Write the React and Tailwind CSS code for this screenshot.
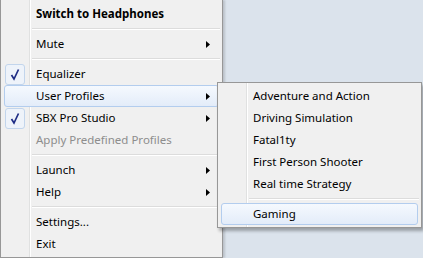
import React from 'react'

const font = { fontFamily: '"Segoe UI", "Noto Sans", sans-serif' }

function Arrow() {
  return (
    <svg width="4" height="7" viewBox="0 0 4 7" className="absolute right-[8px] top-[7px]">
      <path d="M0 0 L4 3.5 L0 7 Z" fill="#000" />
    </svg>
  )
}

function Check() {
  return (
    <div className="absolute left-0 top-0 w-[20px] h-[21px] rounded-[3px] border border-[#c2d5ec] bg-[#eef3fa]">
      <svg width="18" height="19" viewBox="0 0 18 19" className="absolute left-0 top-0">
        <path d="M5.5 10 L8 14 L12.5 4.5" fill="none" stroke="#1f2d85" strokeWidth="1.7" strokeLinejoin="miter" />
      </svg>
    </div>
  )
}

function Item({ label, bold, arrow, checked, active, disabled }) {
  return (
    <div className={`relative h-[22px] mx-[3px] flex items-center pl-[31px] rounded-[3px] border ${active ? 'border-[#b3cdee] bg-gradient-to-b from-[#f5f9fe] to-[#e3ecf9]' : 'border-transparent'}`}>
      {checked && <Check />}
      <span className={`text-[11.5px] leading-none ${bold ? 'font-bold' : ''} ${disabled ? 'text-[#8d8d8d]' : 'text-black'}`}>{label}</span>
      {arrow && <Arrow />}
    </div>
  )
}

function Sep() {
  return (
    <div className="h-[8px] flex items-center ml-[31px] mr-[2px]">
      <div className="w-full border-t border-[#dcdcdc] border-b border-b-white" />
    </div>
  )
}

const gutter = 'bg-[linear-gradient(to_right,#f0f0f0_28px,#e0e1e1_28px,#e0e1e1_29px,#ffffff_29px,#ffffff_30px,#f0f0f0_30px)]'

export default function App() {
  return (
    <div className="relative w-[423px] h-[258px] overflow-hidden bg-[#dbe3ec]" style={font}>
      <div className={`w-[223px] h-[258px] border-x border-b border-[#979797] pt-[3px] ${gutter} shadow-[2px_0_2px_rgba(0,0,0,0.15)]`}>
        <Item label="Switch to Headphones" bold />
        <Sep />
        <Item label="Mute" arrow />
        <Sep />
        <Item label="Equalizer" checked />
        <Item label="User Profiles" arrow active />
        <Item label="SBX Pro Studio" arrow checked />
        <Item label="Apply Predefined Profiles" disabled />
        <Sep />
        <Item label="Launch" arrow />
        <Item label="Help" arrow />
        <Sep />
        <Item label="Settings..." />
        <Item label="Exit" />
      </div>

      <div className={`absolute left-[217px] top-[82px] w-[205px] border border-[#979797] pt-[2px] pb-[2px] ${gutter} shadow-[2px_3px_3px_rgba(0,0,0,0.3)]`}>
        <Item label="Adventure and Action" />
        <Item label="Driving Simulation" />
        <Item label="Fatal1ty" />
        <Item label="First Person Shooter" />
        <Item label="Real time Strategy" />
        <Sep />
        <Item label="Gaming" active />
      </div>
    </div>
  )
}
